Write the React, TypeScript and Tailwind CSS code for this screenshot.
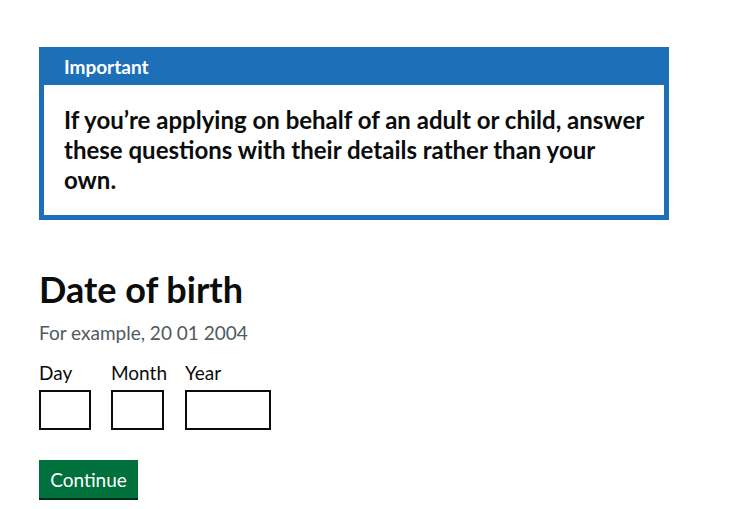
export default function App() {
  const font = { fontFamily: 'Lato, "Noto Sans", sans-serif' };
  return (
    <div className="min-h-[509px] bg-white px-[39px] pt-[47px] text-[#0b0c0c]" style={font}>
      <div className="w-[630px] border-[5px] border-[#1d70b8] bg-[#1d70b8]">
        <div className="px-[20px] pt-[2px] pb-[6px]">
          <h2 className="text-[19px] font-bold leading-[25px] text-white">Important</h2>
        </div>
        <div className="bg-white p-[20px]">
          <p className="text-[24px] font-bold leading-[30px]">
            If you’re applying on behalf of an adult or child, answer these questions with their details rather than your own.
          </p>
        </div>
      </div>
      <fieldset className="mt-[49px]">
        <legend className="mb-[11px] text-[36px] font-bold leading-[40px]">Date of birth</legend>
        <div className="mb-[15px] text-[19px] leading-[25px] text-[#505a5f]">For example, 20 01 2004</div>
        <div className="flex">
          <div className="flex w-[52px] flex-col">
            <label className="mb-[5px] whitespace-nowrap text-[19px] leading-[25px]">Day</label>
            <input className="h-[40px] w-[52px] border-2 border-[#0b0c0c] outline-none" />
          </div>
          <div className="ml-[20px] flex w-[53px] flex-col">
            <label className="mb-[5px] whitespace-nowrap text-[19px] leading-[25px]">Month</label>
            <input className="h-[40px] w-[53px] border-2 border-[#0b0c0c] outline-none" />
          </div>
          <div className="ml-[21px] flex w-[86px] flex-col">
            <label className="mb-[5px] whitespace-nowrap text-[19px] leading-[25px]">Year</label>
            <input className="h-[40px] w-[86px] border-2 border-[#0b0c0c] outline-none" />
          </div>
        </div>
      </fieldset>
      <button className="mt-[30px] h-[38px] w-[99px] bg-[#00703c] text-[19px] leading-[25px] text-white shadow-[0_2px_0_#002d18]">
        Continue
      </button>
    </div>
  );
}
